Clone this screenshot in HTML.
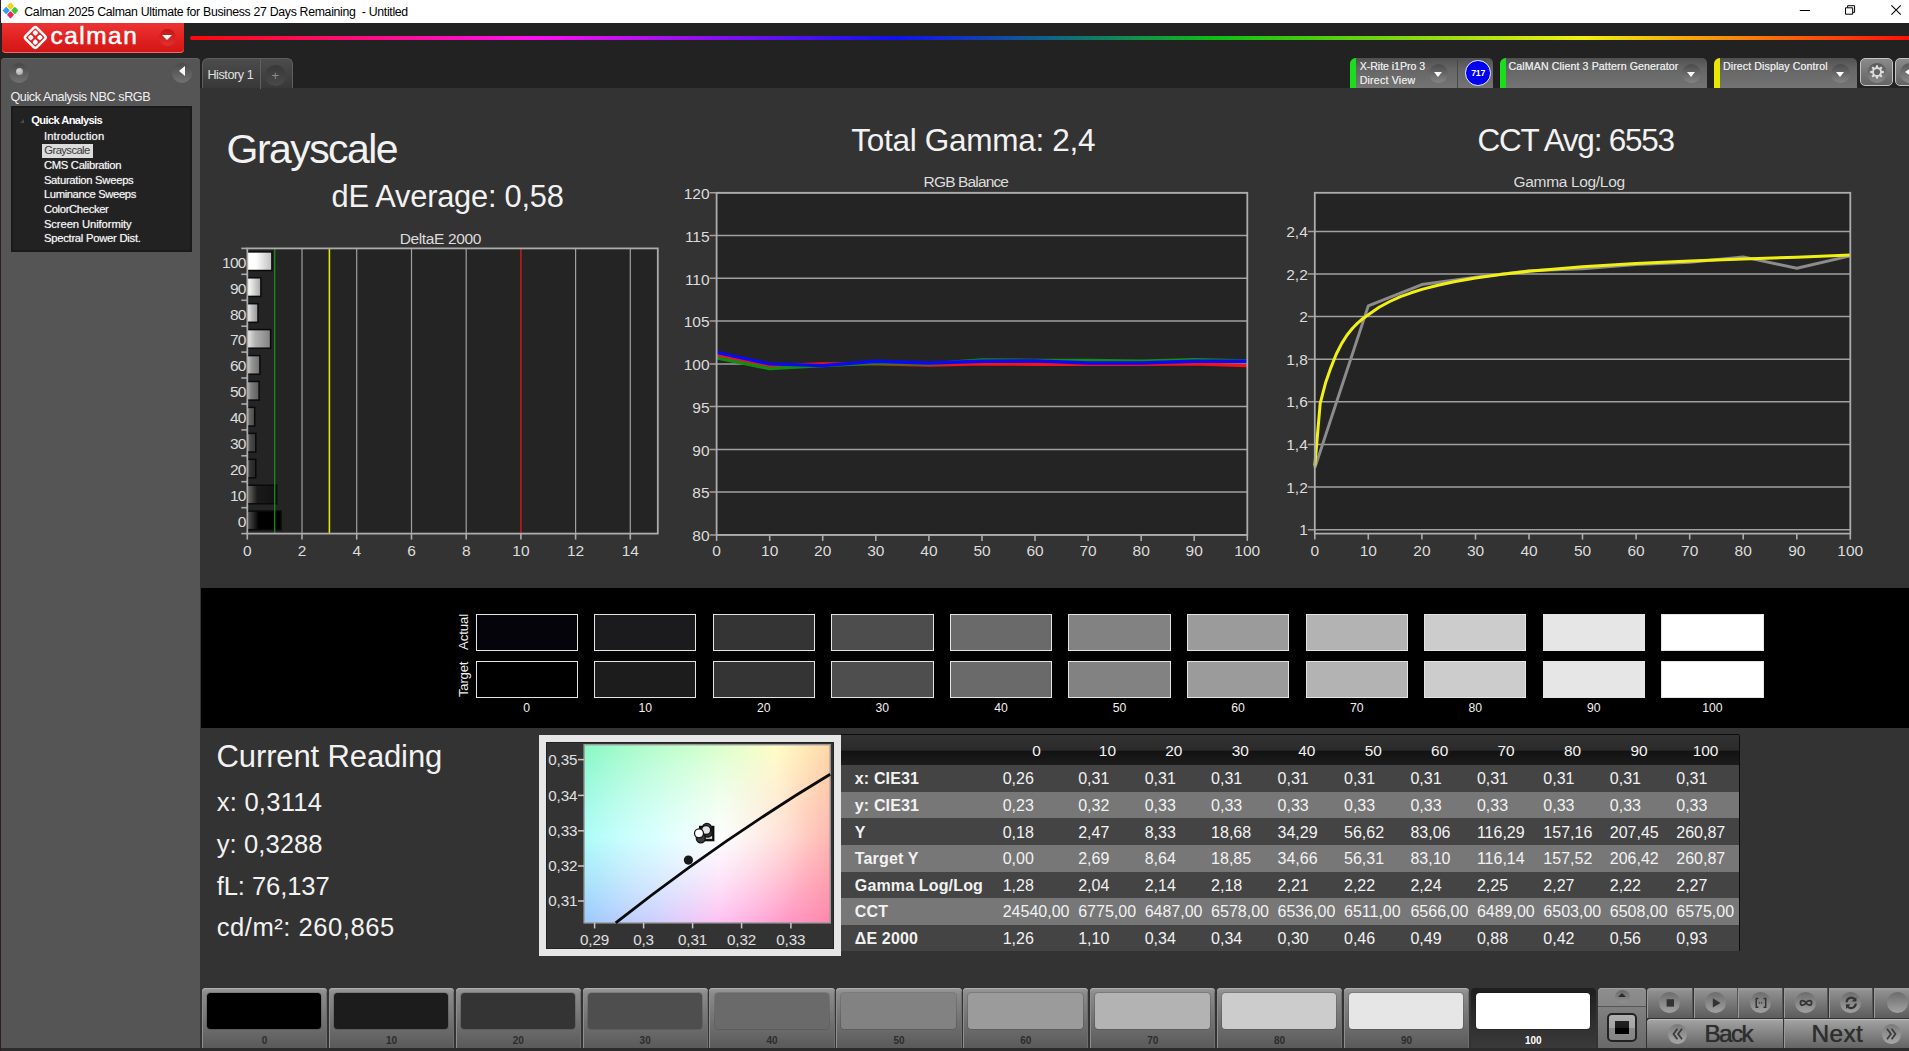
<!DOCTYPE html>
<html lang="en"><head><meta charset="utf-8"><title>Calman 2025 - Grayscale</title>
<style>
*{box-sizing:border-box;margin:0;padding:0}
html,body{width:1909px;height:1051px;overflow:hidden;background:#333;font-family:"Liberation Sans",sans-serif}
.t{position:absolute;white-space:nowrap;line-height:1}
.abs{position:absolute}
#app{position:relative;width:1909px;height:1051px;overflow:hidden;background:#333}
#titlebar{position:absolute;left:0;top:0;width:1909px;height:23px;background:#fff}
#ribbon{position:absolute;left:0;top:23px;width:1909px;height:65px;background:#222}
#rainbow{position:absolute;left:190px;top:35.5px;width:1719px;height:4.2px;border-radius:2px 0 0 2px;background:linear-gradient(90deg,#ff0a0a 0%,#ff10f0 20%,#1010f0 41%,#10c010 60%,#f0f010 81%,#ff1008 100%)}
#logo{position:absolute;left:2px;top:23px;width:182px;height:29.5px;border-radius:0 0 4px 4px;background:linear-gradient(180deg,#ec3434 0%,#e22222 50%,#d01414 100%);box-shadow:0 -1px 0 #ee6a6a inset}
#side{position:absolute;left:1px;top:58px;width:199px;height:990px;background:#555;border-radius:4px 4px 0 0;box-shadow:inset 0 1px 0 #636363}
#tree{position:absolute;left:10.8px;top:105.6px;width:181.4px;height:146px;background:#222;border:2px solid #1a1a1a}
.sel{position:absolute;left:42px;top:143.6px;width:50.5px;height:14px;background:#dcdcdc}
.tab{position:absolute;top:58px;height:30px;background:linear-gradient(180deg,#505050 0%,#656565 35%,#747474 100%);border-radius:6px 5px 0 0;overflow:hidden}
.stripe{position:absolute;left:0;top:0;width:6px;height:30px}
.dd{position:absolute;width:19px;height:19px;border-radius:50%;background:linear-gradient(180deg,#4a4a4a,#848484)}
.dd:after{content:"";position:absolute;left:5px;top:8px;border-left:4.8px solid transparent;border-right:4.8px solid transparent;border-top:5px solid #fff}
#htab{position:absolute;left:201.6px;top:58px;width:91px;height:30px;border-radius:6px 6px 0 0;background:linear-gradient(180deg,#4c4c4c,#383838);border:1px solid #5e5e5e;border-bottom:none}
#band{position:absolute;left:201px;top:587.5px;width:1708px;height:140px;background:#000}
.sw{position:absolute;width:102.3px;height:37.2px;border:1.6px solid #e4e4e4}
#ciebox{position:absolute;left:538.5px;top:734.7px;width:302px;height:221.6px;background:#333;border:7px solid #e6e6e6;box-shadow:inset 0 0 0 1px #222}
table{position:absolute;left:841.3px;top:735.3px;box-shadow:0 -1px 0 #0c0c0c, 1px 0 0 #0c0c0c;border-collapse:collapse;table-layout:fixed;width:897.5px;color:#f2f2f2;font-size:16px}
td,th{height:26.55px;padding:1px 0 0 4px;white-space:nowrap;overflow:visible;text-align:left;font-weight:normal;line-height:25.5px}
th{height:30.1px;text-align:center;padding:0;font-size:15.4px;background:linear-gradient(180deg,#323232 0%,#2a2a2a 51%,#121212 53%,#1c1c1c 100%);line-height:29px;padding-top:1px}
tr.a td{background:#444}
tr.b td{background:#777}
td.l{font-weight:bold;padding-left:13.5px;letter-spacing:0.15px}
#bbar{position:absolute;left:0;top:1048px;width:1909px;height:3px;background:#2c2c2c}
.pb{position:absolute;top:988px;width:125.3px;height:59.5px;border-radius:4px 4px 0 0;background:linear-gradient(180deg,#9a9a9a 0%,#8a8a8a 10%,#5a5a5a 100%);box-shadow:inset 0 1px 0 #b0b0b0, inset 1px 0 0 #8e8e8e, inset -1px 0 0 #6e6e6e}
.pb i{position:absolute;left:5.2px;top:5.2px;width:114.4px;height:35.8px;border-radius:3.5px;display:block;box-shadow:0 0 0 1px rgba(0,0,0,0.13)}
.pb b{position:absolute;left:0;width:100%;text-align:center;top:48px;font-size:10px;line-height:1;color:#2c2c2c}
.pb.on{background:linear-gradient(180deg,#1e1e1e,#3a3a3a);box-shadow:none}
.pb.on b{color:#fff}
.cb{position:absolute;top:988px;height:29.8px;background:linear-gradient(180deg,#a0a0a0 0%,#8e8e8e 12%,#5c5c5c 100%);box-shadow:inset 1px 0 0 #9a9a9a, inset -1px 0 0 #555}
.cb .c{position:absolute;left:50%;top:50%;width:21px;height:21px;margin:-10.5px 0 0 -10.5px;border-radius:50%;background:linear-gradient(180deg,#6c6c6c,#a2a2a2)}
.nb{position:absolute;top:1019.3px;height:28.7px;background:linear-gradient(180deg,#a8a8a8 0%,#9a9a9a 15%,#646464 100%);box-shadow:inset 0 1px 0 #bbb}
</style></head>
<body><div id="app">
<div id="titlebar">
<svg class="abs" style="left:1px;top:1px" width="19" height="19" viewBox="0 0 19 19"><g transform="translate(9.5 9.5) rotate(45) scale(0.86)"><rect x="-6.6" y="-6.6" width="6.2" height="6.2" rx="1" fill="#f4d21c"/><rect x="0.4" y="-6.6" width="6.2" height="6.2" rx="1" fill="#3cc83c"/><rect x="-6.6" y="0.4" width="6.2" height="6.2" rx="1" fill="#28a0f0"/><rect x="0.4" y="0.4" width="6.2" height="6.2" rx="1" fill="#e8285a"/></g></svg>
<div class="t" style="left:24.3px;top:6.0px;font-size:12.3px;color:#000;letter-spacing:-0.31px;white-space:pre;">Calman 2025 Calman Ultimate for Business 27 Days Remaining  - Untitled</div>
<svg class="abs" style="left:1790px;top:0" width="119" height="23" viewBox="0 0 119 23"><path d="M9.8 10.5h10.2" stroke="#000" stroke-width="1" fill="none"/><path d="M55.5 7.8h7.2v6.4h-7.2z M57.6 7.6v-1.9h7v6.6h-1.8" stroke="#000" stroke-width="1" fill="none"/><path d="M101.4 5.3l9.4 9.4M110.8 5.3l-9.4 9.4" stroke="#000" stroke-width="1.05" fill="none"/></svg>
</div>
<div id="ribbon"></div><div id="rainbow"></div>
<div id="logo"></div>
<svg class="abs" style="left:22px;top:24px" width="28" height="27" viewBox="0 0 28 27"><g transform="translate(13.3 13.5) rotate(45)" fill="none" stroke="#fff"><rect x="-7.9" y="-7.9" width="15.8" height="15.8" rx="2.2" stroke-width="2.5"/><g fill="#fff" stroke="none"><rect x="-5.5" y="-5.5" width="4.6" height="4.6" rx="1.6"/><rect x="0.9" y="-5.5" width="4.6" height="4.6" rx="1.6"/><rect x="-5.5" y="0.9" width="4.6" height="4.6" rx="1.6"/><rect x="0.9" y="0.9" width="4.6" height="4.6" rx="1.6"/></g></g></svg>
<div class="t" style="left:50.4px;top:24.0px;font-size:24.4px;color:#fff;letter-spacing:1.55px;-webkit-text-stroke:0.5px #fff;">calman</div>
<div class="abs" style="left:158.6px;top:28.6px;width:17.4px;height:17.4px;border-radius:50%;background:linear-gradient(180deg,#c41414,#e23030)"></div>
<div class="abs" style="left:162.2px;top:35.4px;border-left:5.1px solid transparent;border-right:5.1px solid transparent;border-top:5.2px solid #fff"></div>
<div id="side"></div>
<div class="abs" style="left:9.4px;top:62.8px;width:20px;height:20px;border-radius:50%;background:linear-gradient(180deg,#484848,#727272)"></div>
<div class="abs" style="left:15.7px;top:67.5px;width:7.4px;height:7.4px;border-radius:50%;background:radial-gradient(circle at 40% 35%,#d8d8d8,#999)"></div>
<div class="abs" style="left:171.7px;top:62.8px;width:20px;height:20px;border-radius:50%;background:linear-gradient(180deg,#4a4a4a,#727272)"></div>
<div class="abs" style="left:178.6px;top:66px;border-top:5.5px solid transparent;border-bottom:5.5px solid transparent;border-right:6px solid #fff"></div>
<div class="t" style="left:10.4px;top:91.0px;font-size:12.6px;color:#f0f0f0;letter-spacing:-0.40px;">Quick Analysis NBC sRGB</div>
<div id="tree"></div>
<div class="abs" style="left:19.6px;top:118.6px;border-left:4px solid transparent;border-bottom:4px solid #4a4a4a"></div>
<div class="t" style="left:31.3px;top:115.0px;font-size:11.2px;color:#fff;letter-spacing:-0.64px;font-weight:bold;">Quick Analysis</div>
<div class="sel"></div>
<div class="t" style="left:43.9px;top:131.0px;font-size:11.3px;color:#f4f4f4;letter-spacing:0.12px;text-shadow:0 0 1px #aaa;">Introduction</div>
<div class="t" style="left:44.3px;top:145.0px;font-size:11.3px;color:#3a3a3a;letter-spacing:-0.61px;">Grayscale</div>
<div class="t" style="left:43.9px;top:160.0px;font-size:11.3px;color:#f4f4f4;letter-spacing:-0.33px;text-shadow:0 0 1px #aaa;">CMS Calibration</div>
<div class="t" style="left:43.9px;top:175.0px;font-size:11.3px;color:#f4f4f4;letter-spacing:-0.31px;text-shadow:0 0 1px #aaa;">Saturation Sweeps</div>
<div class="t" style="left:43.9px;top:189.0px;font-size:11.3px;color:#f4f4f4;letter-spacing:-0.41px;text-shadow:0 0 1px #aaa;">Luminance Sweeps</div>
<div class="t" style="left:43.9px;top:204.0px;font-size:11.3px;color:#f4f4f4;letter-spacing:-0.37px;text-shadow:0 0 1px #aaa;">ColorChecker</div>
<div class="t" style="left:43.9px;top:219.0px;font-size:11.3px;color:#f4f4f4;letter-spacing:-0.12px;text-shadow:0 0 1px #aaa;">Screen Uniformity</div>
<div class="t" style="left:43.9px;top:233.0px;font-size:11.3px;color:#f4f4f4;letter-spacing:-0.28px;text-shadow:0 0 1px #aaa;">Spectral Power Dist.</div>
<div id="htab"><div class="abs" style="left:57px;top:0;width:1px;height:30px;background:#606060"></div><div class="abs" style="left:62.5px;top:5.5px;width:21px;height:21px;border-radius:50%;background:linear-gradient(180deg,#383838,#4a4a4a)"></div></div>
<div class="t" style="left:207.4px;top:69.0px;font-size:12.6px;color:#e0e0e0;letter-spacing:-0.41px;">History 1</div>
<div class="t" style="left:271.6px;top:69.0px;font-size:13px;color:#8c8c8c;">+</div>
<div class="tab" style="left:1350.2px;width:143.1px"><div class="stripe" style="background:#1ade1a"></div><div class="dd" style="left:78.5px;top:5.8px"></div></div>
<div class="abs" style="left:1456.8px;top:60px;width:1.2px;height:28px;background:#484848"></div>
<div class="tab" style="left:1499.5px;width:207.8px"><div class="stripe" style="background:#1ade1a"></div><div class="dd" style="left:182.3px;top:5.8px"></div></div>
<div class="tab" style="left:1713.9px;width:142.8px"><div class="stripe" style="background:#e8e800"></div><div class="dd" style="left:117.3px;top:5.8px"></div></div>
<div class="t" style="left:1359.7px;top:61.0px;font-size:10.6px;color:#e6e6e6;letter-spacing:-0.04px;text-shadow:0 0 0.6px #ddd;">X-Rite i1Pro 3</div>
<div class="t" style="left:1359.7px;top:75.0px;font-size:10.6px;color:#e6e6e6;letter-spacing:0.21px;text-shadow:0 0 0.6px #ddd;">Direct View</div>
<div class="t" style="left:1508.5px;top:61.0px;font-size:10.6px;color:#e6e6e6;letter-spacing:0.12px;text-shadow:0 0 0.6px #ddd;">CalMAN Client 3 Pattern Generator</div>
<div class="t" style="left:1723.0px;top:61.0px;font-size:10.6px;color:#e6e6e6;letter-spacing:0.10px;text-shadow:0 0 0.6px #ddd;">Direct Display Control</div>
<div class="abs" style="left:1465.2px;top:60.3px;width:25.6px;height:25.6px;border-radius:50%;background:#0000f0;border:1.2px solid #f0f0ff"></div>
<div class="t" style="left:1471.2px;top:69.0px;font-size:8.8px;color:#fff;letter-spacing:-0.24px;font-weight:bold;">717</div>
<div class="abs" style="left:1860.2px;top:58.4px;width:33.2px;height:27.4px;border-radius:5px;border:1.2px solid #c4c4c4;background:linear-gradient(180deg,#8a8a8a,#646464)"></div>
<div class="abs" style="left:1866.9px;top:62.5px;width:20px;height:20px;border-radius:50%;background:linear-gradient(180deg,#585858,#8a8a8a)"></div>
<svg class="abs" style="left:1866.9px;top:61.7px" width="20" height="20" viewBox="-10 -10 20 20"><polygon points="6.84,-0.89 6.84,0.89 4.72,1.31 4.26,2.42 5.47,4.21 4.21,5.47 2.42,4.26 1.31,4.72 0.89,6.84 -0.89,6.84 -1.31,4.72 -2.42,4.26 -4.21,5.47 -5.47,4.21 -4.26,2.42 -4.72,1.31 -6.84,0.89 -6.84,-0.89 -4.72,-1.31 -4.26,-2.42 -5.47,-4.21 -4.21,-5.47 -2.42,-4.26 -1.31,-4.72 -0.89,-6.84 0.89,-6.84 1.31,-4.72 2.42,-4.26 4.21,-5.47 5.47,-4.21 4.26,-2.42 4.72,-1.31" fill="#dcdcdc"/><circle r="3.1" fill="#666"/></svg>
<div class="abs" style="left:1894.8px;top:58.4px;width:20px;height:27.4px;border-radius:5px 0 0 5px;border:1.2px solid #c4c4c4;background:linear-gradient(180deg,#8a8a8a,#646464)"></div>
<div class="abs" style="left:1899.5px;top:62.5px;width:20px;height:20px;border-radius:50%;background:linear-gradient(180deg,#585858,#8a8a8a)"></div>
<div class="abs" style="left:1904.5px;top:66.6px;border-top:5.2px solid transparent;border-bottom:5.2px solid transparent;border-right:7px solid #fff"></div>
<div class="t" style="left:226.6px;top:129.0px;font-size:41px;color:#f2f2f2;letter-spacing:-1.57px;">Grayscale</div>
<div class="t" style="left:331.5px;top:182.0px;font-size:30.8px;color:#f2f2f2;letter-spacing:-0.23px;">dE Average: 0,58</div>
<div class="t" style="left:851.3px;top:125.0px;font-size:31.5px;color:#f2f2f2;letter-spacing:-0.29px;">Total Gamma: 2,4</div>
<div class="t" style="left:1477.5px;top:125.0px;font-size:31.5px;color:#f2f2f2;letter-spacing:-1.25px;">CCT Avg: 6553</div>
<div class="t" style="left:216.6px;top:741.0px;font-size:31px;color:#f2f2f2;letter-spacing:-0.13px;">Current Reading</div>
<div class="t" style="left:216.7px;top:790.0px;font-size:25.6px;color:#f2f2f2;letter-spacing:0.23px;">x: 0,3114</div>
<div class="t" style="left:216.7px;top:832.0px;font-size:25.6px;color:#f2f2f2;letter-spacing:0.07px;">y: 0,3288</div>
<div class="t" style="left:216.7px;top:874.0px;font-size:25.6px;color:#f2f2f2;letter-spacing:-0.09px;">fL: 76,137</div>
<div class="t" style="left:216.7px;top:915.0px;font-size:25.6px;color:#f2f2f2;letter-spacing:0.52px;">cd/m²: 260,865</div>
<svg class="abs" style="left:0;top:0" width="1909" height="600" viewBox="0 0 1909 600" font-family="Liberation Sans, sans-serif"><defs><linearGradient id="bg100" x1="0" x2="1" y1="0" y2="0"><stop offset="0" stop-color="rgb(255,255,255)"/><stop offset="0.35" stop-color="rgb(255,255,255)"/><stop offset="1" stop-color="rgb(190,190,190)"/></linearGradient><linearGradient id="bg90" x1="0" x2="1" y1="0" y2="0"><stop offset="0" stop-color="rgb(255,255,255)"/><stop offset="0.35" stop-color="rgb(229,229,229)"/><stop offset="1" stop-color="rgb(164,164,164)"/></linearGradient><linearGradient id="bg80" x1="0" x2="1" y1="0" y2="0"><stop offset="0" stop-color="rgb(255,255,255)"/><stop offset="0.35" stop-color="rgb(204,204,204)"/><stop offset="1" stop-color="rgb(146,146,146)"/></linearGradient><linearGradient id="bg70" x1="0" x2="1" y1="0" y2="0"><stop offset="0" stop-color="rgb(238,238,238)"/><stop offset="0.35" stop-color="rgb(178,178,178)"/><stop offset="1" stop-color="rgb(128,128,128)"/></linearGradient><linearGradient id="bg60" x1="0" x2="1" y1="0" y2="0"><stop offset="0" stop-color="rgb(213,213,213)"/><stop offset="0.35" stop-color="rgb(153,153,153)"/><stop offset="1" stop-color="rgb(110,110,110)"/></linearGradient><linearGradient id="bg50" x1="0" x2="1" y1="0" y2="0"><stop offset="0" stop-color="rgb(187,187,187)"/><stop offset="0.35" stop-color="rgb(127,127,127)"/><stop offset="1" stop-color="rgb(91,91,91)"/></linearGradient><linearGradient id="bg40" x1="0" x2="1" y1="0" y2="0"><stop offset="0" stop-color="rgb(192,192,192)"/><stop offset="0.35" stop-color="rgb(102,102,102)"/><stop offset="1" stop-color="rgb(73,73,73)"/></linearGradient><linearGradient id="bg30" x1="0" x2="1" y1="0" y2="0"><stop offset="0" stop-color="rgb(166,166,166)"/><stop offset="0.35" stop-color="rgb(76,76,76)"/><stop offset="1" stop-color="rgb(54,54,54)"/></linearGradient><linearGradient id="bg20" x1="0" x2="1" y1="0" y2="0"><stop offset="0" stop-color="rgb(141,141,141)"/><stop offset="0.35" stop-color="rgb(51,51,51)"/><stop offset="1" stop-color="rgb(36,36,36)"/></linearGradient><linearGradient id="bg10" x1="0" x2="1" y1="0" y2="0"><stop offset="0" stop-color="rgb(116,116,116)"/><stop offset="0.35" stop-color="rgb(26,26,26)"/><stop offset="1" stop-color="rgb(18,18,18)"/></linearGradient><linearGradient id="bg0" x1="0" x2="1" y1="0" y2="0"><stop offset="0" stop-color="rgb(90,90,90)"/><stop offset="0.35" stop-color="rgb(0,0,0)"/><stop offset="1" stop-color="rgb(0,0,0)"/></linearGradient></defs>
<rect x="247.3" y="248.4" width="410.5" height="285.2" fill="#242424"/>
<line x1="302.0" y1="248.4" x2="302.0" y2="533.6" stroke="#a0a0a0" stroke-width="1.2"/>
<line x1="356.7" y1="248.4" x2="356.7" y2="533.6" stroke="#a0a0a0" stroke-width="1.2"/>
<line x1="411.5" y1="248.4" x2="411.5" y2="533.6" stroke="#a0a0a0" stroke-width="1.2"/>
<line x1="466.2" y1="248.4" x2="466.2" y2="533.6" stroke="#a0a0a0" stroke-width="1.2"/>
<line x1="575.6" y1="248.4" x2="575.6" y2="533.6" stroke="#a0a0a0" stroke-width="1.2"/>
<line x1="630.3" y1="248.4" x2="630.3" y2="533.6" stroke="#a0a0a0" stroke-width="1.2"/>
<rect x="246.7" y="251.9" width="25.2" height="18.6" fill="url(#bg100)" stroke="#0a0a0a" stroke-width="1.5"/>
<line x1="241.3" y1="248.4" x2="247.3" y2="248.4" stroke="#acacac" stroke-width="1.6"/>
<text x="246.3" y="267.7" font-size="15.5" fill="#dcdcdc" text-anchor="end" textLength="24.2" lengthAdjust="spacing">100</text>
<rect x="246.7" y="277.8" width="14.2" height="18.6" fill="url(#bg90)" stroke="#0a0a0a" stroke-width="1.5"/>
<line x1="241.3" y1="274.3" x2="247.3" y2="274.3" stroke="#acacac" stroke-width="1.6"/>
<text x="246.3" y="293.6" font-size="15.5" fill="#dcdcdc" text-anchor="end" textLength="16.4" lengthAdjust="spacing">90</text>
<rect x="246.7" y="303.7" width="11.3" height="18.6" fill="url(#bg80)" stroke="#0a0a0a" stroke-width="1.5"/>
<line x1="241.3" y1="300.3" x2="247.3" y2="300.3" stroke="#acacac" stroke-width="1.6"/>
<text x="246.3" y="319.5" font-size="15.5" fill="#dcdcdc" text-anchor="end" textLength="16.4" lengthAdjust="spacing">80</text>
<rect x="246.7" y="329.6" width="23.9" height="18.6" fill="url(#bg70)" stroke="#0a0a0a" stroke-width="1.5"/>
<line x1="241.3" y1="326.2" x2="247.3" y2="326.2" stroke="#acacac" stroke-width="1.6"/>
<text x="246.3" y="345.4" font-size="15.5" fill="#dcdcdc" text-anchor="end" textLength="16.4" lengthAdjust="spacing">70</text>
<rect x="246.7" y="355.6" width="13.2" height="18.6" fill="url(#bg60)" stroke="#0a0a0a" stroke-width="1.5"/>
<line x1="241.3" y1="352.1" x2="247.3" y2="352.1" stroke="#acacac" stroke-width="1.6"/>
<text x="246.3" y="371.4" font-size="15.5" fill="#dcdcdc" text-anchor="end" textLength="16.4" lengthAdjust="spacing">60</text>
<rect x="246.7" y="381.5" width="12.4" height="18.6" fill="url(#bg50)" stroke="#0a0a0a" stroke-width="1.5"/>
<line x1="241.3" y1="378.0" x2="247.3" y2="378.0" stroke="#acacac" stroke-width="1.6"/>
<text x="246.3" y="397.3" font-size="15.5" fill="#dcdcdc" text-anchor="end" textLength="16.4" lengthAdjust="spacing">50</text>
<rect x="246.7" y="407.4" width="8.0" height="18.6" fill="url(#bg40)" stroke="#0a0a0a" stroke-width="1.5"/>
<line x1="241.3" y1="404.0" x2="247.3" y2="404.0" stroke="#acacac" stroke-width="1.6"/>
<text x="246.3" y="423.2" font-size="15.5" fill="#dcdcdc" text-anchor="end" textLength="16.4" lengthAdjust="spacing">40</text>
<rect x="246.7" y="433.4" width="9.1" height="18.6" fill="url(#bg30)" stroke="#0a0a0a" stroke-width="1.5"/>
<line x1="241.3" y1="429.9" x2="247.3" y2="429.9" stroke="#acacac" stroke-width="1.6"/>
<text x="246.3" y="449.2" font-size="15.5" fill="#dcdcdc" text-anchor="end" textLength="16.4" lengthAdjust="spacing">30</text>
<rect x="246.7" y="459.3" width="9.1" height="18.6" fill="url(#bg20)" stroke="#0a0a0a" stroke-width="1.5"/>
<line x1="241.3" y1="455.8" x2="247.3" y2="455.8" stroke="#acacac" stroke-width="1.6"/>
<text x="246.3" y="475.1" font-size="15.5" fill="#dcdcdc" text-anchor="end" textLength="16.4" lengthAdjust="spacing">20</text>
<rect x="246.7" y="485.2" width="29.9" height="18.6" fill="url(#bg10)" stroke="#0a0a0a" stroke-width="1.5"/>
<line x1="241.3" y1="481.7" x2="247.3" y2="481.7" stroke="#acacac" stroke-width="1.6"/>
<text x="246.3" y="501.0" font-size="15.5" fill="#dcdcdc" text-anchor="end" textLength="16.4" lengthAdjust="spacing">10</text>
<rect x="246.7" y="511.1" width="34.3" height="18.6" fill="url(#bg0)" stroke="#0a0a0a" stroke-width="1.5"/>
<line x1="241.3" y1="507.7" x2="247.3" y2="507.7" stroke="#acacac" stroke-width="1.6"/>
<text x="246.3" y="526.9" font-size="15.5" fill="#dcdcdc" text-anchor="end">0</text>
<line x1="274.7" y1="248.4" x2="274.7" y2="533.6" stroke="#1c8a1c" stroke-width="1.3"/>
<line x1="329.4" y1="248.4" x2="329.4" y2="533.6" stroke="#e6e600" stroke-width="1.6"/>
<line x1="520.9" y1="248.4" x2="520.9" y2="533.6" stroke="#d01818" stroke-width="1.5"/>
<rect x="247.3" y="248.4" width="410.5" height="285.2" fill="none" stroke="#acacac" stroke-width="1.8"/>
<line x1="241.3" y1="533.6" x2="247.3" y2="533.6" stroke="#acacac" stroke-width="1.6"/>
<line x1="247.3" y1="533.6" x2="247.3" y2="539.6" stroke="#acacac" stroke-width="1.6"/>
<text x="247.3" y="556.0" font-size="15.5" fill="#dcdcdc" text-anchor="middle">0</text>
<line x1="302.0" y1="533.6" x2="302.0" y2="539.6" stroke="#acacac" stroke-width="1.6"/>
<text x="302.0" y="556.0" font-size="15.5" fill="#dcdcdc" text-anchor="middle">2</text>
<line x1="356.7" y1="533.6" x2="356.7" y2="539.6" stroke="#acacac" stroke-width="1.6"/>
<text x="356.7" y="556.0" font-size="15.5" fill="#dcdcdc" text-anchor="middle">4</text>
<line x1="411.5" y1="533.6" x2="411.5" y2="539.6" stroke="#acacac" stroke-width="1.6"/>
<text x="411.5" y="556.0" font-size="15.5" fill="#dcdcdc" text-anchor="middle">6</text>
<line x1="466.2" y1="533.6" x2="466.2" y2="539.6" stroke="#acacac" stroke-width="1.6"/>
<text x="466.2" y="556.0" font-size="15.5" fill="#dcdcdc" text-anchor="middle">8</text>
<line x1="520.9" y1="533.6" x2="520.9" y2="539.6" stroke="#acacac" stroke-width="1.6"/>
<text x="520.9" y="556.0" font-size="15.5" fill="#dcdcdc" text-anchor="middle">10</text>
<line x1="575.6" y1="533.6" x2="575.6" y2="539.6" stroke="#acacac" stroke-width="1.6"/>
<text x="575.6" y="556.0" font-size="15.5" fill="#dcdcdc" text-anchor="middle">12</text>
<line x1="630.3" y1="533.6" x2="630.3" y2="539.6" stroke="#acacac" stroke-width="1.6"/>
<text x="630.3" y="556.0" font-size="15.5" fill="#dcdcdc" text-anchor="middle">14</text>
<text x="440.5" y="243.8" font-size="15.5" fill="#dcdcdc" text-anchor="middle" textLength="81.5" lengthAdjust="spacing">DeltaE 2000</text><rect x="716.6" y="192.8" width="530.7" height="342.1" fill="#242424"/>
<line x1="709.6" y1="534.9" x2="1247.3" y2="534.9" stroke="#a0a0a0" stroke-width="1.5"/>
<text x="709.6" y="541.2" font-size="15.5" fill="#dcdcdc" text-anchor="end">80</text>
<line x1="709.6" y1="492.1" x2="1247.3" y2="492.1" stroke="#a0a0a0" stroke-width="1.5"/>
<text x="709.6" y="498.4" font-size="15.5" fill="#dcdcdc" text-anchor="end">85</text>
<line x1="709.6" y1="449.4" x2="1247.3" y2="449.4" stroke="#a0a0a0" stroke-width="1.5"/>
<text x="709.6" y="455.7" font-size="15.5" fill="#dcdcdc" text-anchor="end">90</text>
<line x1="709.6" y1="406.6" x2="1247.3" y2="406.6" stroke="#a0a0a0" stroke-width="1.5"/>
<text x="709.6" y="412.9" font-size="15.5" fill="#dcdcdc" text-anchor="end">95</text>
<line x1="709.6" y1="363.9" x2="1247.3" y2="363.9" stroke="#a0a0a0" stroke-width="1.5"/>
<text x="709.6" y="370.2" font-size="15.5" fill="#dcdcdc" text-anchor="end">100</text>
<line x1="709.6" y1="321.1" x2="1247.3" y2="321.1" stroke="#a0a0a0" stroke-width="1.5"/>
<text x="709.6" y="327.4" font-size="15.5" fill="#dcdcdc" text-anchor="end">105</text>
<line x1="709.6" y1="278.3" x2="1247.3" y2="278.3" stroke="#a0a0a0" stroke-width="1.5"/>
<text x="709.6" y="284.6" font-size="15.5" fill="#dcdcdc" text-anchor="end">110</text>
<line x1="709.6" y1="235.6" x2="1247.3" y2="235.6" stroke="#a0a0a0" stroke-width="1.5"/>
<text x="709.6" y="241.9" font-size="15.5" fill="#dcdcdc" text-anchor="end">115</text>
<line x1="709.6" y1="192.8" x2="1247.3" y2="192.8" stroke="#a0a0a0" stroke-width="1.5"/>
<text x="709.6" y="199.1" font-size="15.5" fill="#dcdcdc" text-anchor="end">120</text>
<line x1="716.6" y1="534.9" x2="716.6" y2="540.9" stroke="#acacac" stroke-width="1.6"/>
<text x="716.6" y="556.0" font-size="15.5" fill="#dcdcdc" text-anchor="middle">0</text>
<line x1="769.7" y1="534.9" x2="769.7" y2="540.9" stroke="#acacac" stroke-width="1.6"/>
<text x="769.7" y="556.0" font-size="15.5" fill="#dcdcdc" text-anchor="middle">10</text>
<line x1="822.7" y1="534.9" x2="822.7" y2="540.9" stroke="#acacac" stroke-width="1.6"/>
<text x="822.7" y="556.0" font-size="15.5" fill="#dcdcdc" text-anchor="middle">20</text>
<line x1="875.8" y1="534.9" x2="875.8" y2="540.9" stroke="#acacac" stroke-width="1.6"/>
<text x="875.8" y="556.0" font-size="15.5" fill="#dcdcdc" text-anchor="middle">30</text>
<line x1="928.9" y1="534.9" x2="928.9" y2="540.9" stroke="#acacac" stroke-width="1.6"/>
<text x="928.9" y="556.0" font-size="15.5" fill="#dcdcdc" text-anchor="middle">40</text>
<line x1="982.0" y1="534.9" x2="982.0" y2="540.9" stroke="#acacac" stroke-width="1.6"/>
<text x="982.0" y="556.0" font-size="15.5" fill="#dcdcdc" text-anchor="middle">50</text>
<line x1="1035.0" y1="534.9" x2="1035.0" y2="540.9" stroke="#acacac" stroke-width="1.6"/>
<text x="1035.0" y="556.0" font-size="15.5" fill="#dcdcdc" text-anchor="middle">60</text>
<line x1="1088.1" y1="534.9" x2="1088.1" y2="540.9" stroke="#acacac" stroke-width="1.6"/>
<text x="1088.1" y="556.0" font-size="15.5" fill="#dcdcdc" text-anchor="middle">70</text>
<line x1="1141.2" y1="534.9" x2="1141.2" y2="540.9" stroke="#acacac" stroke-width="1.6"/>
<text x="1141.2" y="556.0" font-size="15.5" fill="#dcdcdc" text-anchor="middle">80</text>
<line x1="1194.2" y1="534.9" x2="1194.2" y2="540.9" stroke="#acacac" stroke-width="1.6"/>
<text x="1194.2" y="556.0" font-size="15.5" fill="#dcdcdc" text-anchor="middle">90</text>
<line x1="1247.3" y1="534.9" x2="1247.3" y2="540.9" stroke="#acacac" stroke-width="1.6"/>
<text x="1247.3" y="556.0" font-size="15.5" fill="#dcdcdc" text-anchor="middle">100</text>
<text x="966.3" y="187.0" font-size="15.5" fill="#dcdcdc" text-anchor="middle" textLength="85.4" lengthAdjust="spacing">RGB Balance</text>
<polyline points="716.6,355.3 769.7,365.6 822.7,363.9 875.8,363.9 928.9,365.1 982.0,363.9 1035.0,364.3 1088.1,364.3 1141.2,364.3 1194.2,363.9 1247.3,365.6" fill="none" stroke="#f0141e" stroke-width="3.4" stroke-linejoin="round"/>
<polyline points="716.6,357.9 769.7,368.6 822.7,365.6 875.8,363.0 928.9,363.9 982.0,360.0 1035.0,360.4 1088.1,360.4 1141.2,361.3 1194.2,359.6 1247.3,360.9" fill="none" stroke="#148c14" stroke-width="3.4" stroke-linejoin="round"/>
<polyline points="716.6,352.3 769.7,363.9 822.7,365.6 875.8,361.3 928.9,363.0 982.0,361.3 1035.0,360.9 1088.1,363.0 1141.2,363.0 1194.2,361.3 1247.3,361.3" fill="none" stroke="#0a0af0" stroke-width="3.4" stroke-linejoin="round"/>
<rect x="716.6" y="192.8" width="530.7" height="342.1" fill="none" stroke="#acacac" stroke-width="1.8"/><rect x="1314.8" y="192.8" width="535.5" height="340.8" fill="#242424"/>
<line x1="1307.8" y1="529.7" x2="1850.3" y2="529.7" stroke="#a0a0a0" stroke-width="1.5"/>
<text x="1307.8" y="535.3" font-size="15.5" fill="#dcdcdc" text-anchor="end">1</text>
<line x1="1307.8" y1="487.1" x2="1850.3" y2="487.1" stroke="#a0a0a0" stroke-width="1.5"/>
<text x="1307.8" y="492.7" font-size="15.5" fill="#dcdcdc" text-anchor="end">1,2</text>
<line x1="1307.8" y1="444.5" x2="1850.3" y2="444.5" stroke="#a0a0a0" stroke-width="1.5"/>
<text x="1307.8" y="450.1" font-size="15.5" fill="#dcdcdc" text-anchor="end">1,4</text>
<line x1="1307.8" y1="401.8" x2="1850.3" y2="401.8" stroke="#a0a0a0" stroke-width="1.5"/>
<text x="1307.8" y="407.4" font-size="15.5" fill="#dcdcdc" text-anchor="end">1,6</text>
<line x1="1307.8" y1="359.2" x2="1850.3" y2="359.2" stroke="#a0a0a0" stroke-width="1.5"/>
<text x="1307.8" y="364.8" font-size="15.5" fill="#dcdcdc" text-anchor="end">1,8</text>
<line x1="1307.8" y1="316.6" x2="1850.3" y2="316.6" stroke="#a0a0a0" stroke-width="1.5"/>
<text x="1307.8" y="322.2" font-size="15.5" fill="#dcdcdc" text-anchor="end">2</text>
<line x1="1307.8" y1="274.0" x2="1850.3" y2="274.0" stroke="#a0a0a0" stroke-width="1.5"/>
<text x="1307.8" y="279.6" font-size="15.5" fill="#dcdcdc" text-anchor="end">2,2</text>
<line x1="1307.8" y1="231.4" x2="1850.3" y2="231.4" stroke="#a0a0a0" stroke-width="1.5"/>
<text x="1307.8" y="237.0" font-size="15.5" fill="#dcdcdc" text-anchor="end">2,4</text>
<line x1="1314.8" y1="533.6" x2="1314.8" y2="539.6" stroke="#acacac" stroke-width="1.6"/>
<text x="1314.8" y="556.0" font-size="15.5" fill="#dcdcdc" text-anchor="middle">0</text>
<line x1="1368.3" y1="533.6" x2="1368.3" y2="539.6" stroke="#acacac" stroke-width="1.6"/>
<text x="1368.3" y="556.0" font-size="15.5" fill="#dcdcdc" text-anchor="middle">10</text>
<line x1="1421.9" y1="533.6" x2="1421.9" y2="539.6" stroke="#acacac" stroke-width="1.6"/>
<text x="1421.9" y="556.0" font-size="15.5" fill="#dcdcdc" text-anchor="middle">20</text>
<line x1="1475.5" y1="533.6" x2="1475.5" y2="539.6" stroke="#acacac" stroke-width="1.6"/>
<text x="1475.5" y="556.0" font-size="15.5" fill="#dcdcdc" text-anchor="middle">30</text>
<line x1="1529.0" y1="533.6" x2="1529.0" y2="539.6" stroke="#acacac" stroke-width="1.6"/>
<text x="1529.0" y="556.0" font-size="15.5" fill="#dcdcdc" text-anchor="middle">40</text>
<line x1="1582.5" y1="533.6" x2="1582.5" y2="539.6" stroke="#acacac" stroke-width="1.6"/>
<text x="1582.5" y="556.0" font-size="15.5" fill="#dcdcdc" text-anchor="middle">50</text>
<line x1="1636.1" y1="533.6" x2="1636.1" y2="539.6" stroke="#acacac" stroke-width="1.6"/>
<text x="1636.1" y="556.0" font-size="15.5" fill="#dcdcdc" text-anchor="middle">60</text>
<line x1="1689.7" y1="533.6" x2="1689.7" y2="539.6" stroke="#acacac" stroke-width="1.6"/>
<text x="1689.7" y="556.0" font-size="15.5" fill="#dcdcdc" text-anchor="middle">70</text>
<line x1="1743.2" y1="533.6" x2="1743.2" y2="539.6" stroke="#acacac" stroke-width="1.6"/>
<text x="1743.2" y="556.0" font-size="15.5" fill="#dcdcdc" text-anchor="middle">80</text>
<line x1="1796.8" y1="533.6" x2="1796.8" y2="539.6" stroke="#acacac" stroke-width="1.6"/>
<text x="1796.8" y="556.0" font-size="15.5" fill="#dcdcdc" text-anchor="middle">90</text>
<line x1="1850.3" y1="533.6" x2="1850.3" y2="539.6" stroke="#acacac" stroke-width="1.6"/>
<text x="1850.3" y="556.0" font-size="15.5" fill="#dcdcdc" text-anchor="middle">100</text>
<text x="1569.3" y="187.0" font-size="15.5" fill="#dcdcdc" text-anchor="middle" textLength="111.5" lengthAdjust="spacing">Gamma Log/Log</text>
<polyline points="1314.8,467.9 1368.3,305.9 1421.9,284.6 1475.5,277.2 1529.0,270.8 1582.5,268.7 1636.1,264.4 1689.7,262.3 1743.2,256.9 1796.8,268.2 1850.3,255.9" fill="none" stroke="#8c8c8c" stroke-width="3" stroke-linejoin="round"/>
<polyline points="1314.8,465.8 1320.2,403.4 1325.5,383.1 1330.9,367.6 1336.2,354.3 1341.6,343.6 1346.9,335.2 1352.3,328.5 1357.6,323.1 1363.0,318.5 1368.3,314.7 1379.1,307.3 1389.8,301.5 1400.5,296.7 1411.2,292.8 1421.9,289.4 1438.0,285.2 1454.0,281.8 1475.5,278.0 1502.2,274.2 1529.0,271.3 1582.5,266.7 1636.1,263.4 1689.7,260.9 1743.2,258.9 1796.8,257.3 1850.3,255.0" fill="none" stroke="#f0f014" stroke-width="3" stroke-linejoin="round"/>
<rect x="1314.8" y="192.8" width="535.5" height="340.8" fill="none" stroke="#acacac" stroke-width="1.8"/></svg>
<div id="band"></div>
<div class="sw" style="left:475.6px;top:613.6px;background:rgb(4, 4, 10)"></div>
<div class="sw" style="left:475.6px;top:660.9px;background:rgb(0, 0, 0)"></div>
<div class="t" style="left:523.3px;top:702.0px;font-size:12.2px;color:#f0f0f0;">0</div>
<div class="sw" style="left:594.2px;top:613.6px;background:rgb(27, 27, 29)"></div>
<div class="sw" style="left:594.2px;top:660.9px;background:rgb(28, 28, 28)"></div>
<div class="t" style="left:638.5px;top:702.0px;font-size:12.2px;color:#f0f0f0;">10</div>
<div class="sw" style="left:712.7px;top:613.6px;background:rgb(52, 52, 52)"></div>
<div class="sw" style="left:712.7px;top:660.9px;background:rgb(52, 52, 52)"></div>
<div class="t" style="left:757.1px;top:702.0px;font-size:12.2px;color:#f0f0f0;">20</div>
<div class="sw" style="left:831.3px;top:613.6px;background:rgb(77, 77, 77)"></div>
<div class="sw" style="left:831.3px;top:660.9px;background:rgb(78, 78, 78)"></div>
<div class="t" style="left:875.6px;top:702.0px;font-size:12.2px;color:#f0f0f0;">30</div>
<div class="sw" style="left:949.9px;top:613.6px;background:rgb(106, 106, 106)"></div>
<div class="sw" style="left:949.9px;top:660.9px;background:rgb(106, 106, 106)"></div>
<div class="t" style="left:994.2px;top:702.0px;font-size:12.2px;color:#f0f0f0;">40</div>
<div class="sw" style="left:1068.4px;top:613.6px;background:rgb(130, 130, 130)"></div>
<div class="sw" style="left:1068.4px;top:660.9px;background:rgb(130, 130, 130)"></div>
<div class="t" style="left:1112.8px;top:702.0px;font-size:12.2px;color:#f0f0f0;">50</div>
<div class="sw" style="left:1187.0px;top:613.6px;background:rgb(155, 155, 155)"></div>
<div class="sw" style="left:1187.0px;top:660.9px;background:rgb(155, 155, 155)"></div>
<div class="t" style="left:1231.3px;top:702.0px;font-size:12.2px;color:#f0f0f0;">60</div>
<div class="sw" style="left:1305.6px;top:613.6px;background:rgb(179, 179, 179)"></div>
<div class="sw" style="left:1305.6px;top:660.9px;background:rgb(179, 179, 179)"></div>
<div class="t" style="left:1349.9px;top:702.0px;font-size:12.2px;color:#f0f0f0;">70</div>
<div class="sw" style="left:1424.2px;top:613.6px;background:rgb(204, 204, 204)"></div>
<div class="sw" style="left:1424.2px;top:660.9px;background:rgb(204, 204, 204)"></div>
<div class="t" style="left:1468.5px;top:702.0px;font-size:12.2px;color:#f0f0f0;">80</div>
<div class="sw" style="left:1542.7px;top:613.6px;background:rgb(230, 230, 230)"></div>
<div class="sw" style="left:1542.7px;top:660.9px;background:rgb(230, 230, 230)"></div>
<div class="t" style="left:1587.0px;top:702.0px;font-size:12.2px;color:#f0f0f0;">90</div>
<div class="sw" style="left:1661.3px;top:613.6px;background:rgb(255, 255, 255)"></div>
<div class="sw" style="left:1661.3px;top:660.9px;background:rgb(255, 255, 255)"></div>
<div class="t" style="left:1702.2px;top:702.0px;font-size:12.2px;color:#f0f0f0;">100</div>
<div class="t" style="left:457.2px;top:649.6px;font-size:13.2px;color:#f0f0f0;transform-origin:0 0;transform:rotate(-90deg);letter-spacing:-0.1px">Actual</div>
<div class="t" style="left:457.2px;top:696.6px;font-size:13.2px;color:#f0f0f0;transform-origin:0 0;transform:rotate(-90deg);letter-spacing:-0.25px">Target</div>
<div id="ciebox"></div>
<svg class="abs" style="left:538px;top:734px" width="304" height="224" viewBox="538 734 304 224" font-family="Liberation Sans, sans-serif"><defs>
<linearGradient id="ct" x1="0" x2="1"><stop offset="0" stop-color="#8cf8c6"/><stop offset="0.42" stop-color="#c0ffc6"/><stop offset="0.78" stop-color="#ffffc8"/><stop offset="1" stop-color="#ffd8a8"/></linearGradient>
<linearGradient id="cm" x1="0" x2="1"><stop offset="0" stop-color="#a4fcf8"/><stop offset="0.3" stop-color="#c8ffff"/><stop offset="0.55" stop-color="#fbffff"/><stop offset="0.8" stop-color="#ffdcd4"/><stop offset="1" stop-color="#ffb8b0"/></linearGradient>
<linearGradient id="cb" x1="0" x2="1"><stop offset="0" stop-color="#9cc8ff"/><stop offset="0.3" stop-color="#c8c4ff"/><stop offset="0.55" stop-color="#ffb4f0"/><stop offset="1" stop-color="#ff86ac"/></linearGradient>
<linearGradient id="m1g" x1="0" x2="0" y1="0" y2="1"><stop offset="0" stop-color="#000"/><stop offset="0.52" stop-color="#fff"/><stop offset="1" stop-color="#fff"/></linearGradient>
<linearGradient id="m2g" x1="0" x2="0" y1="0" y2="1"><stop offset="0" stop-color="#000"/><stop offset="0.52" stop-color="#000"/><stop offset="1" stop-color="#fff"/></linearGradient>
<radialGradient id="cw" gradientUnits="userSpaceOnUse" cx="685" cy="842" r="125"><stop offset="0" stop-color="#fff" stop-opacity="0.42"/><stop offset="0.5" stop-color="#fff" stop-opacity="0.24"/><stop offset="1" stop-color="#fff" stop-opacity="0"/></radialGradient>
<mask id="m1" maskUnits="userSpaceOnUse" x="584" y="744" width="247" height="180"><rect x="584" y="744" width="247" height="180" fill="url(#m1g)"/></mask>
<mask id="m2" maskUnits="userSpaceOnUse" x="584" y="744" width="247" height="180"><rect x="584" y="744" width="247" height="180" fill="url(#m2g)"/></mask>
</defs><rect x="584.1" y="744.7" width="246.1" height="178.2" fill="url(#ct)"/><rect x="584.1" y="744.7" width="246.1" height="178.2" fill="url(#cm)" mask="url(#m1)"/><rect x="584.1" y="744.7" width="246.1" height="178.2" fill="url(#cb)" mask="url(#m2)"/><rect x="584.1" y="744.7" width="246.1" height="178.2" fill="url(#cw)"/><rect x="584.1" y="744.7" width="246.1" height="178.2" fill="none" stroke="#9a9a9a" stroke-width="1.4"/><path d="M615.7 922.9 Q720 840.5 830.2 774.3" fill="none" stroke="#0a0a0a" stroke-width="2.9"/><circle cx="688.4" cy="860.1" r="4.6" fill="#181818"/><rect x="700" y="826.8" width="13.4" height="13.5" fill="#2a2a2a" stroke="#0c0c0c" stroke-width="2"/><rect x="705.5" y="836.2" width="6.6" height="2.6" fill="#e8e8e8"/><circle cx="706.9" cy="828.0" r="4.5" fill="#555" stroke="#141414" stroke-width="1.3"/><circle cx="707.6" cy="832.5" r="4.5" fill="#3a3a3a" stroke="#141414" stroke-width="1.3"/><circle cx="706.1" cy="830.0" r="4.5" fill="#e4e4e4" stroke="#141414" stroke-width="1.3"/><circle cx="700.8" cy="838.3" r="4.5" fill="#3c3c3c" stroke="#141414" stroke-width="1.3"/><circle cx="699.0" cy="833.3" r="4.5" fill="#ffffff" stroke="#141414" stroke-width="1.3"/><line x1="578" y1="759.6" x2="584.1" y2="759.6" stroke="#c8c8c8" stroke-width="1.5"/><text x="577.5" y="764.9" font-size="15.2" fill="#e0e0e0" text-anchor="end" textLength="29.2" lengthAdjust="spacing">0,35</text><line x1="578" y1="795.4" x2="584.1" y2="795.4" stroke="#c8c8c8" stroke-width="1.5"/><text x="577.5" y="800.7" font-size="15.2" fill="#e0e0e0" text-anchor="end" textLength="29.2" lengthAdjust="spacing">0,34</text><line x1="578" y1="830.8" x2="584.1" y2="830.8" stroke="#c8c8c8" stroke-width="1.5"/><text x="577.5" y="836.1" font-size="15.2" fill="#e0e0e0" text-anchor="end" textLength="29.2" lengthAdjust="spacing">0,33</text><line x1="578" y1="866.0" x2="584.1" y2="866.0" stroke="#c8c8c8" stroke-width="1.5"/><text x="577.5" y="871.3" font-size="15.2" fill="#e0e0e0" text-anchor="end" textLength="29.2" lengthAdjust="spacing">0,32</text><line x1="578" y1="901.0" x2="584.1" y2="901.0" stroke="#c8c8c8" stroke-width="1.5"/><text x="577.5" y="906.3" font-size="15.2" fill="#e0e0e0" text-anchor="end" textLength="29.2" lengthAdjust="spacing">0,31</text><line x1="594.6" y1="922.9" x2="594.6" y2="928.4" stroke="#c8c8c8" stroke-width="1.5"/><text x="594.6" y="944.6" font-size="15.2" fill="#e0e0e0" text-anchor="middle" textLength="29.2" lengthAdjust="spacing">0,29</text><line x1="643.6" y1="922.9" x2="643.6" y2="928.4" stroke="#c8c8c8" stroke-width="1.5"/><text x="643.6" y="944.6" font-size="15.2" fill="#e0e0e0" text-anchor="middle" textLength="20.5" lengthAdjust="spacing">0,3</text><line x1="692.6" y1="922.9" x2="692.6" y2="928.4" stroke="#c8c8c8" stroke-width="1.5"/><text x="692.6" y="944.6" font-size="15.2" fill="#e0e0e0" text-anchor="middle" textLength="29.2" lengthAdjust="spacing">0,31</text><line x1="741.6" y1="922.9" x2="741.6" y2="928.4" stroke="#c8c8c8" stroke-width="1.5"/><text x="741.6" y="944.6" font-size="15.2" fill="#e0e0e0" text-anchor="middle" textLength="29.2" lengthAdjust="spacing">0,32</text><line x1="790.9" y1="922.9" x2="790.9" y2="928.4" stroke="#c8c8c8" stroke-width="1.5"/><text x="790.9" y="944.6" font-size="15.2" fill="#e0e0e0" text-anchor="middle" textLength="29.2" lengthAdjust="spacing">0,33</text></svg>
<table><colgroup><col style="width:157.4px"><col style="width:75.5px"><col style="width:66.46px"><col style="width:66.46px"><col style="width:66.46px"><col style="width:66.46px"><col style="width:66.46px"><col style="width:66.46px"><col style="width:66.46px"><col style="width:66.46px"><col style="width:66.46px"><col style="width:66.46px"></colgroup>
<tr><th></th><th>0</th><th>10</th><th>20</th><th>30</th><th>40</th><th>50</th><th>60</th><th>70</th><th>80</th><th>90</th><th>100</th></tr>
<tr class="a"><td class="l">x: CIE31</td><td>0,26</td><td>0,31</td><td>0,31</td><td>0,31</td><td>0,31</td><td>0,31</td><td>0,31</td><td>0,31</td><td>0,31</td><td>0,31</td><td>0,31</td></tr>
<tr class="b"><td class="l">y: CIE31</td><td>0,23</td><td>0,32</td><td>0,33</td><td>0,33</td><td>0,33</td><td>0,33</td><td>0,33</td><td>0,33</td><td>0,33</td><td>0,33</td><td>0,33</td></tr>
<tr class="a"><td class="l">Y</td><td>0,18</td><td>2,47</td><td>8,33</td><td>18,68</td><td>34,29</td><td>56,62</td><td>83,06</td><td>116,29</td><td>157,16</td><td>207,45</td><td>260,87</td></tr>
<tr class="b"><td class="l">Target Y</td><td>0,00</td><td>2,69</td><td>8,64</td><td>18,85</td><td>34,66</td><td>56,31</td><td>83,10</td><td>116,14</td><td>157,52</td><td>206,42</td><td>260,87</td></tr>
<tr class="a"><td class="l">Gamma Log/Log</td><td>1,28</td><td>2,04</td><td>2,14</td><td>2,18</td><td>2,21</td><td>2,22</td><td>2,24</td><td>2,25</td><td>2,27</td><td>2,22</td><td>2,27</td></tr>
<tr class="b"><td class="l">CCT</td><td>24540,00</td><td>6775,00</td><td>6487,00</td><td>6578,00</td><td>6536,00</td><td>6511,00</td><td>6566,00</td><td>6489,00</td><td>6503,00</td><td>6508,00</td><td>6575,00</td></tr>
<tr class="a"><td class="l">ΔE 2000</td><td>1,26</td><td>1,10</td><td>0,34</td><td>0,34</td><td>0,30</td><td>0,46</td><td>0,49</td><td>0,88</td><td>0,42</td><td>0,56</td><td>0,93</td></tr>
</table>
<div class="pb" style="left:201.9px"><i style="background:rgb(0,0,0)"></i><b>0</b></div>
<div class="pb" style="left:328.8px"><i style="background:rgb(28,28,28)"></i><b>10</b></div>
<div class="pb" style="left:455.7px"><i style="background:rgb(52,52,52)"></i><b>20</b></div>
<div class="pb" style="left:582.5px"><i style="background:rgb(78,78,78)"></i><b>30</b></div>
<div class="pb" style="left:709.4px"><i style="background:rgb(106,106,106)"></i><b>40</b></div>
<div class="pb" style="left:836.3px"><i style="background:rgb(130,130,130)"></i><b>50</b></div>
<div class="pb" style="left:963.2px"><i style="background:rgb(155,155,155)"></i><b>60</b></div>
<div class="pb" style="left:1090.1px"><i style="background:rgb(179,179,179)"></i><b>70</b></div>
<div class="pb" style="left:1216.9px"><i style="background:rgb(204,204,204)"></i><b>80</b></div>
<div class="pb" style="left:1343.8px"><i style="background:rgb(230,230,230)"></i><b>90</b></div>
<div class="pb on" style="left:1470.7px"><i style="background:rgb(255,255,255)"></i><b>100</b></div>
<div class="abs" style="left:1597.9px;top:988px;width:48.2px;height:18px;border-radius:4px 4px 0 0;background:linear-gradient(180deg,#8e8e8e,#868686);box-shadow:inset 0 1px 0 #a0a0a0"></div>
<div class="abs" style="left:1597.9px;top:1006px;width:48.2px;height:42px;background:linear-gradient(180deg,#808080,#6a6a6a);border-top:1px solid #555"></div>
<div class="abs" style="left:1614.5px;top:989.5px;width:15px;height:13px;border-radius:50%;background:linear-gradient(180deg,#6a6a6a,#909090)"></div>
<div class="abs" style="left:1617.5px;top:993px;border-left:4.5px solid transparent;border-right:4.5px solid transparent;border-bottom:4.6px solid #2c2c2c"></div>
<div class="abs" style="left:1606.8px;top:1012.7px;width:29.8px;height:29.8px;border-radius:5px;border:2.2px solid #222;background:linear-gradient(180deg,#b0b0b0 0%,#a4a4a4 50%,#8a8a8a 52%,#848484 100%)"></div>
<div class="abs" style="left:1615.3px;top:1021.3px;width:13.4px;height:13px;background:linear-gradient(180deg,#222 0%,#1a1a1a 50%,#000 52%)"></div>
<div class="cb" style="left:1647px;width:45.8px;border-radius:4px 0 0 0;"><div class="c"></div></div>
<div class="cb" style="left:1693.6px;width:44.0px;"><div class="c"></div></div>
<div class="cb" style="left:1738.4px;width:44.3px;"><div class="c"></div></div>
<div class="cb" style="left:1783.5px;width:44.3px;"><div class="c"></div></div>
<div class="cb" style="left:1828.6px;width:44.3px;"><div class="c"></div></div>
<div class="cb" style="left:1873.7px;width:47.1px;"><div class="c"></div></div>
<svg class="abs" style="left:1640px;top:985px" width="269" height="66" viewBox="1640 985 269 66" font-family="Liberation Sans, sans-serif"><rect x="1666.6" y="999.2" width="7.4" height="7.4" fill="#333"/><path d="M1712.8 998.3L1720.6 1002.9L1712.8 1007.5z" fill="#333"/><path d="M1758.4 998.5h-2.2v8.8h2.2M1763.5 998.5h2.2v8.8h-2.2" fill="none" stroke="#333" stroke-width="1.5"/><path d="M1758.8 1002.9h4.4" stroke="#333" stroke-width="1.3" stroke-dasharray="1.2 0.9"/><path d="M1806.0 1002.9c-1.6-3-5.6-3-5.6 0s4 3 5.6 0c1.6-3 5.6-3 5.6 0s-4 3-5.6 0z" fill="none" stroke="#333" stroke-width="1.7"/><path d="M1846.6 1002.3a4.7 4.7 0 0 1 8-3.2" fill="none" stroke="#333" stroke-width="2.2"/><path d="M1855.8 1003.5a4.7 4.7 0 0 1 -8 3.2" fill="none" stroke="#333" stroke-width="2.2"/><path d="M1856.4 996.9v4.6h-4.6z M1846.0 1008.9v-4.6h4.6z" fill="#333"/></svg>
<div class="nb" style="left:1647px;width:136px;border-radius:4px 0 0 0"></div>
<div class="nb" style="left:1783.8px;width:126px;box-shadow:inset 0 1px 0 #bbb, inset 1px 0 0 #999"></div>
<div class="abs" style="left:1668px;top:1024.4px;width:19.4px;height:19.4px;border-radius:50%;background:linear-gradient(180deg,#7a7a7a,#a8a8a8)"></div>
<div class="abs" style="left:1881.6px;top:1024.4px;width:19.4px;height:19.4px;border-radius:50%;background:linear-gradient(180deg,#7a7a7a,#a8a8a8)"></div>
<svg class="abs" style="left:1660px;top:1020px" width="249" height="28" viewBox="1660 1020 249 28"><g fill="none" stroke="#3a3a3a" stroke-width="1.7"><path d="M1677.4 1028.8l-3.9 5.2 3.9 5.2M1682 1028.8l-3.9 5.2 3.9 5.2"/><path d="M1887 1028.8l3.9 5.2-3.9 5.2M1891.6 1028.8l3.9 5.2-3.9 5.2"/></g></svg>
<div class="t" style="left:1704.5px;top:1022.0px;font-size:24.5px;color:#2e2e2e;letter-spacing:-1.72px;text-shadow:0 0 0.8px #2e2e2e;">Back</div>
<div class="t" style="left:1811.5px;top:1022.0px;font-size:24.5px;color:#2e2e2e;letter-spacing:0.31px;text-shadow:0 0 0.8px #2e2e2e;">Next</div>
<div id="bbar"></div>
<div class="abs" style="left:0;top:0;width:1px;height:1051px;background:#2e2020"></div>
</div></body></html>
